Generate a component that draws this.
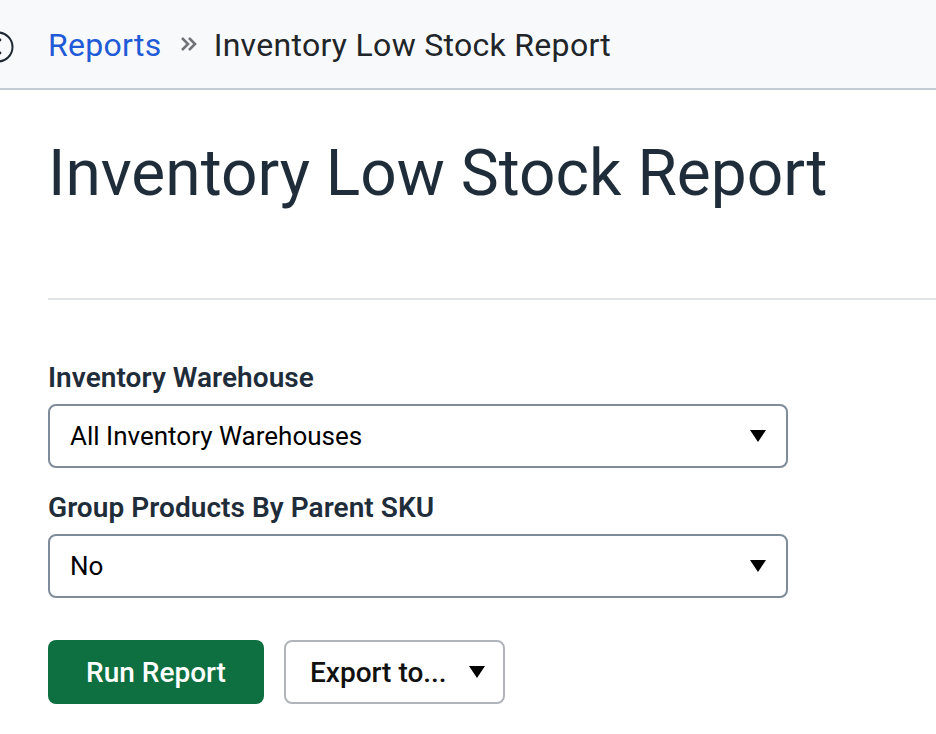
<script>
  let warehouses = ['All Inventory Warehouses'];
  let grouping = ['No'];
</script>

<div class="page">
  <header class="crumbs">
    <span class="menu-toggle" aria-hidden="true">
      <svg width="32" height="32" viewBox="0 0 32 32">
        <circle cx="16" cy="16" r="14.5" fill="none" stroke="#1f2933" stroke-width="2" />
        <circle cx="18" cy="9" r="1.4" fill="#1f2933" />
        <circle cx="18" cy="22" r="1.4" fill="#1f2933" />
      </svg>
    </span>
    <a class="crumb-link" href="#reports">Reports</a>
    <svg class="crumb-sep" width="18" height="16" viewBox="0 0 18 16">
      <path d="M2 2l6 6-6 6M9 2l6 6-6 6" fill="none" stroke="#707478" stroke-width="2.6" />
    </svg>
    <span class="crumb-current">Inventory Low Stock Report</span>
  </header>

  <main class="content">
    <h1>Inventory Low Stock Report</h1>
    <hr />

    <form class="report-form">
      <div class="field">
        <label for="warehouse">Inventory Warehouse</label>
        <div id="warehouse" class="select">
          <span>{warehouses[0]}</span>
          <i class="caret"></i>
        </div>
      </div>
      <div class="field">
        <label for="group">Group Products By Parent SKU</label>
        <div id="group" class="select">
          <span>{grouping[0]}</span>
          <i class="caret"></i>
        </div>
      </div>
      <div class="actions">
        <button type="button" class="run">Run Report</button>
        <button type="button" class="export">
          Export to...
          <i class="caret"></i>
        </button>
      </div>
    </form>
  </main>
</div>

<style>
  :global(body) {
    margin: 0;
    background: #fff;
    font-family: Roboto, "Liberation Sans", sans-serif;
  }
  .page {
    height: 734px;
    overflow: hidden;
  }
  .crumbs {
    position: relative;
    box-sizing: border-box;
    display: flex;
    align-items: center;
    height: 90px;
    padding: 2px 0 0 48px;
    background: #f8f9fb;
    border-bottom: 2px solid #c3ccd5;
    font-size: 32px;
    letter-spacing: 0.3px;
    line-height: 38px;
  }
  .menu-toggle {
    position: absolute;
    left: -18px;
    top: 31px;
    display: block;
    line-height: 0;
  }
  .crumb-link {
    color: #1f5ad7;
    text-decoration: none;
  }
  .crumb-sep {
    margin: 0 16px 3px 18px;
  }
  .crumb-current {
    color: #212529;
  }
  .content {
    padding-left: 48px;
  }
  h1 {
    margin: 46px 0 0;
    font-size: 64px;
    line-height: 76px;
    font-weight: 400;
    color: #1f2d3a;
  }
  hr {
    margin: 86px 0 0;
    border: 0;
    border-top: 2px solid #e1e4e7;
  }
  .report-form {
    margin-top: 60px;
    width: 740px;
    display: flex;
    flex-direction: column;
  }
  .field {
    display: flex;
    flex-direction: column;
    margin-bottom: 22px;
  }
  label {
    font-size: 28px;
    line-height: 36px;
    font-weight: 600;
    letter-spacing: 0.05px;
    color: #1f2d3a;
    margin-bottom: 8px;
  }
  .select {
    box-sizing: border-box;
    height: 64px;
    display: flex;
    align-items: center;
    justify-content: space-between;
    padding: 0 20px;
    border: 2px solid #7e8c9a;
    border-radius: 8px;
    background: #fff;
    font-size: 26px;
    color: #000;
  }
  .caret {
    width: 0;
    height: 0;
    border-left: 8px solid transparent;
    border-right: 8px solid transparent;
    border-top: 12px solid #000;
  }
  .actions {
    display: flex;
    gap: 20px;
    margin-top: 20px;
  }
  button {
    box-sizing: border-box;
    height: 64px;
    border-radius: 8px;
    font-family: inherit;
    font-size: 28px;
    font-weight: 500;
  }
  .run {
    width: 216px;
    padding-top: 2px;
    border: 0;
    background: #0e7040;
    color: #fff;
  }
  .export {
    width: 221px;
    display: flex;
    align-items: center;
    justify-content: space-between;
    padding: 0 18px 0 24px;
    border: 2px solid #b1b5ba;
    background: #fff;
    color: #111;
  }
</style>
